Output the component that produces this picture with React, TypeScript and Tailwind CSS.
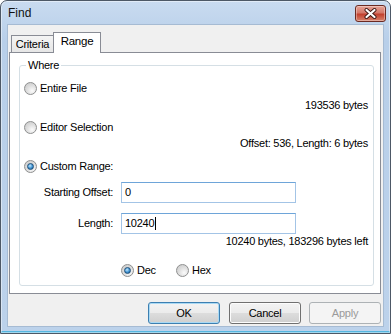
import React from "react";

const font = "font-['Liberation_Sans',Arial,sans-serif]";

function Radio({ checked }: { checked?: boolean }) {
  return (
    <span className="flex h-[13px] w-[13px] shrink-0 items-center justify-center rounded-full border border-[#8e8f8f] bg-[radial-gradient(circle_at_65%_70%,#fbfbfb_0%,#e0e0e0_45%,#c4c4c4_100%)]">
      {checked && (
        <span className="h-[7px] w-[7px] rounded-full border border-[#1f4f78] bg-[radial-gradient(circle_at_40%_35%,#c3e8fd_0%,#3e92d2_55%,#17507e_100%)]" />
      )}
    </span>
  );
}

function Button({
  label,
  primary,
  disabled,
}: {
  label: string;
  primary?: boolean;
  disabled?: boolean;
}) {
  let cls =
    "h-[22px] w-[72px] rounded-[3px] border flex items-center justify-center ";
  if (disabled) {
    cls += "border-[#adb2b5] bg-[#f4f4f4] text-[#9a9a9a]";
  } else if (primary) {
    cls +=
      "border-[#3c7fb1] text-black shadow-[inset_0_0_0_1px_#a9d9f4] bg-[linear-gradient(#f3f3f3_0%,#ebebeb_50%,#dddddd_50%,#cfcfcf_100%)]";
  } else {
    cls +=
      "border-[#707070] text-black shadow-[inset_0_0_0_1px_#fcfcfc] bg-[linear-gradient(#f3f3f3_0%,#ebebeb_50%,#dddddd_50%,#cfcfcf_100%)]";
  }
  return <div className={cls}>{label}</div>;
}

export default function App() {
  return (
    <div
      className={`${font} flex h-[334px] w-[391px] flex-col overflow-hidden rounded-t-[7px] border border-[#4d5866] bg-[linear-gradient(#c9dbf0,#b8cfe9_40px,#bcd2eb)] text-[11px] tracking-[-0.25px] text-black shadow-[inset_0_0_0_1px_rgba(255,255,255,0.45),inset_0_-2px_0_#55b6e0]`}
    >
      {/* title bar */}
      <div className="flex h-[24px] shrink-0 items-center justify-between pl-[7px] pr-[4px]">
        <span className="text-[12px] tracking-normal text-[#111]">Find</span>
        <div className="flex h-[17px] w-[31px] items-center justify-center rounded-[3px] border border-[#6b2a22] bg-[linear-gradient(#e6a396_0%,#d4786a_45%,#c2402e_55%,#d7826c_100%)] shadow-[inset_0_0_0_1px_rgba(255,255,255,0.35)]">
          <svg width="13" height="11" viewBox="0 0 13 11">
            <path
              d="M2.5 2 L10.5 9 M10.5 2 L2.5 9"
              stroke="#3d1714"
              strokeWidth="4"
              strokeLinecap="round"
            />
            <path
              d="M2.5 2 L10.5 9 M10.5 2 L2.5 9"
              stroke="#ffffff"
              strokeWidth="2.2"
              strokeLinecap="round"
            />
          </svg>
        </div>
      </div>

      {/* client */}
      <div className="mx-[7px] flex h-[301px] flex-col bg-[#f0f0f0] shadow-[0_0_0_1px_#a6bbd3]">
        {/* tabs */}
        <div className="relative z-10 flex h-[28px] items-end pl-[3px]">
          <div className="mb-px flex h-[17px] w-[43px] items-center justify-center border border-b-0 border-[#898c95] bg-[linear-gradient(#f4f4f4,#e6e6e6)]">
            Criteria
          </div>
          <div className="-ml-px flex h-[21px] w-[48px] items-center justify-center border border-b-0 border-[#898c95] bg-white pb-[2px] text-[11.5px]">
            Range
          </div>
        </div>

        {/* tab panel */}
        <div className="-mt-px ml-px h-[242px] w-[372px] border border-[#898c95] bg-white pt-[12px]">
          <div className="relative ml-[9px] flex h-[221px] w-[355px] flex-col rounded-[3px] border border-[#d5dfe5] pr-[5px]">
            <span className="absolute -top-[7px] left-[6px] bg-white px-[2px] leading-[13px]">
              Where
            </span>

            <div className="mt-[15px] flex h-[14px] items-center gap-[3px] pl-[4px]">
              <Radio />
              <span>Entire File</span>
            </div>
            <div className="mt-[3px] flex h-[14px] items-center justify-end">
              193536 bytes
            </div>

            <div className="mt-[8px] flex h-[14px] items-center gap-[3px] pl-[4px]">
              <Radio />
              <span>Editor Selection</span>
            </div>
            <div className="mt-[2px] flex h-[14px] items-center justify-end">
              Offset: 536, Length: 6 bytes
            </div>

            <div className="mt-[9px] flex h-[14px] items-center gap-[3px] pl-[4px]">
              <Radio checked />
              <span>Custom Range:</span>
            </div>

            <div className="mt-[9px] flex h-[21px] items-center">
              <span className="w-[93px] text-right">Starting Offset:</span>
              <div className="ml-[8px] flex h-[21px] w-[175px] items-center border border-[#a3c4e6] border-t-[#6ea5d9] bg-white pl-[3px]">
                0
              </div>
            </div>

            <div className="mt-[10px] flex h-[21px] items-center">
              <span className="w-[93px] text-right">Length:</span>
              <div className="ml-[8px] flex h-[21px] w-[175px] items-center border border-[#a3c4e6] border-t-[#6ea5d9] bg-white pl-[3px]">
                10240
                <span className="ml-px h-[13px] w-px bg-black" />
              </div>
            </div>
            <div className="flex h-[14px] items-center justify-end">
              10240 bytes, 183296 bytes left
            </div>

            <div className="mt-[15px] flex h-[14px] items-center pl-[101px]">
              <div className="flex w-[55px] items-center gap-[3px]">
                <Radio checked />
                <span>Dec</span>
              </div>
              <div className="flex items-center gap-[3px]">
                <Radio />
                <span>Hex</span>
              </div>
            </div>
          </div>
        </div>

        {/* buttons */}
        <div className="mt-[8px] flex justify-end pr-[2px]">
          <Button label="OK" primary />
          <div className="w-[9px]" />
          <Button label="Cancel" />
          <div className="w-[8px]" />
          <Button label="Apply" disabled />
        </div>
      </div>
    </div>
  );
}
